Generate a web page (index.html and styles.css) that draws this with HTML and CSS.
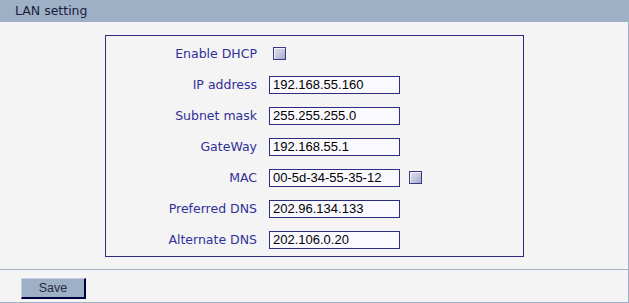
FILE: index.html
```html
<!DOCTYPE html>
<html lang="en">
<head>
  <meta charset="UTF-8" />
  <title>LAN setting</title>
  <link rel="stylesheet" href="styles.css">
</head>
<body>
  <div class="panel">
    <div class="panel-title">LAN setting</div>
    <div class="panel-body">
      <div class="form-box">
        <div class="row">
          <label for="dhcp">Enable DHCP</label>
          <input type="checkbox" id="dhcp" class="check" />
        </div>
        <div class="row">
          <label for="ip">IP address</label>
          <input type="text" id="ip" class="field" value="192.168.55.160" />
        </div>
        <div class="row">
          <label for="mask">Subnet mask</label>
          <input type="text" id="mask" class="field" value="255.255.255.0" />
        </div>
        <div class="row">
          <label for="gw">GateWay</label>
          <input type="text" id="gw" class="field" value="192.168.55.1" />
        </div>
        <div class="row">
          <label for="mac">MAC</label>
          <input type="text" id="mac" class="field" value="00-5d-34-55-35-12" />
          <input type="checkbox" class="check check-mac" aria-label="Edit MAC" />
        </div>
        <div class="row">
          <label for="dns1">Preferred DNS</label>
          <input type="text" id="dns1" class="field" value="202.96.134.133" />
        </div>
        <div class="row">
          <label for="dns2">Alternate DNS</label>
          <input type="text" id="dns2" class="field" value="202.106.0.20" />
        </div>
      </div>
    </div>
    <div class="panel-foot">
      <button class="btn">Save</button>
    </div>
  </div>
</body>
</html>
```

FILE: styles.css
```css
:root {
  --steel: #9eb0c6;
  --navy: #2c2c80;
  --bg: #f4f4f4;
}
body {
  margin: 0;
  background: var(--bg);
  font-family: "DejaVu Sans", Verdana, sans-serif;
}
.panel {
  width: 628px;
  height: 302px;
  border-right: 1px solid var(--steel);
  border-bottom: 1px solid var(--steel);
  background: var(--bg);
}
.panel-title {
  height: 22px;
  line-height: 22px;
  padding-left: 15px;
  background: var(--steel);
  color: #1c1c3a;
  font-size: 12.5px;
}
.panel-body {
  padding: 13px 0 12px 105px;
  border-bottom: 1px solid #a3b1c3;
}
.form-box {
  width: 417px;
  padding: 2px 0 1px;
  border: 1px solid var(--navy);
}
.row {
  display: flex;
  align-items: center;
  height: 31px;
}
.row label {
  width: 151px;
  margin-right: 12px;
  text-align: right;
  color: #30309a;
  font-size: 12.5px;
}
.field {
  width: 131px;
  height: 18px;
  box-sizing: border-box;
  margin: 0;
  padding: 0 3px;
  border: 1px solid var(--navy);
  background: #f9f9ff;
  font-family: "Liberation Sans", Arial, sans-serif;
  font-size: 13px;
  color: #000;
}
.check {
  appearance: none;
  width: 13px;
  height: 13px;
  margin: 0 0 0 4px;
  border: 1px solid #3a3a84;
  background: linear-gradient(135deg, #e2e2f0 0%, #c4c4de 55%, #a8a8cc 100%);
  box-shadow: inset 1px 1px 0 #f2f2fa;
}
.check-mac {
  margin-left: 9px;
}
.panel-foot {
  padding: 7px 0 0 21px;
}
.btn {
  width: 65px;
  height: 21px;
  padding: 0;
  border: 1px solid;
  border-color: #c6cce8 #000040 #000040 #c6cce8;
  border-width: 1px 2px 2px 1px;
  background: var(--steel);
  color: #2a2a40;
  font-family: "Liberation Sans", Arial, sans-serif;
  font-size: 12.5px;
}
```
